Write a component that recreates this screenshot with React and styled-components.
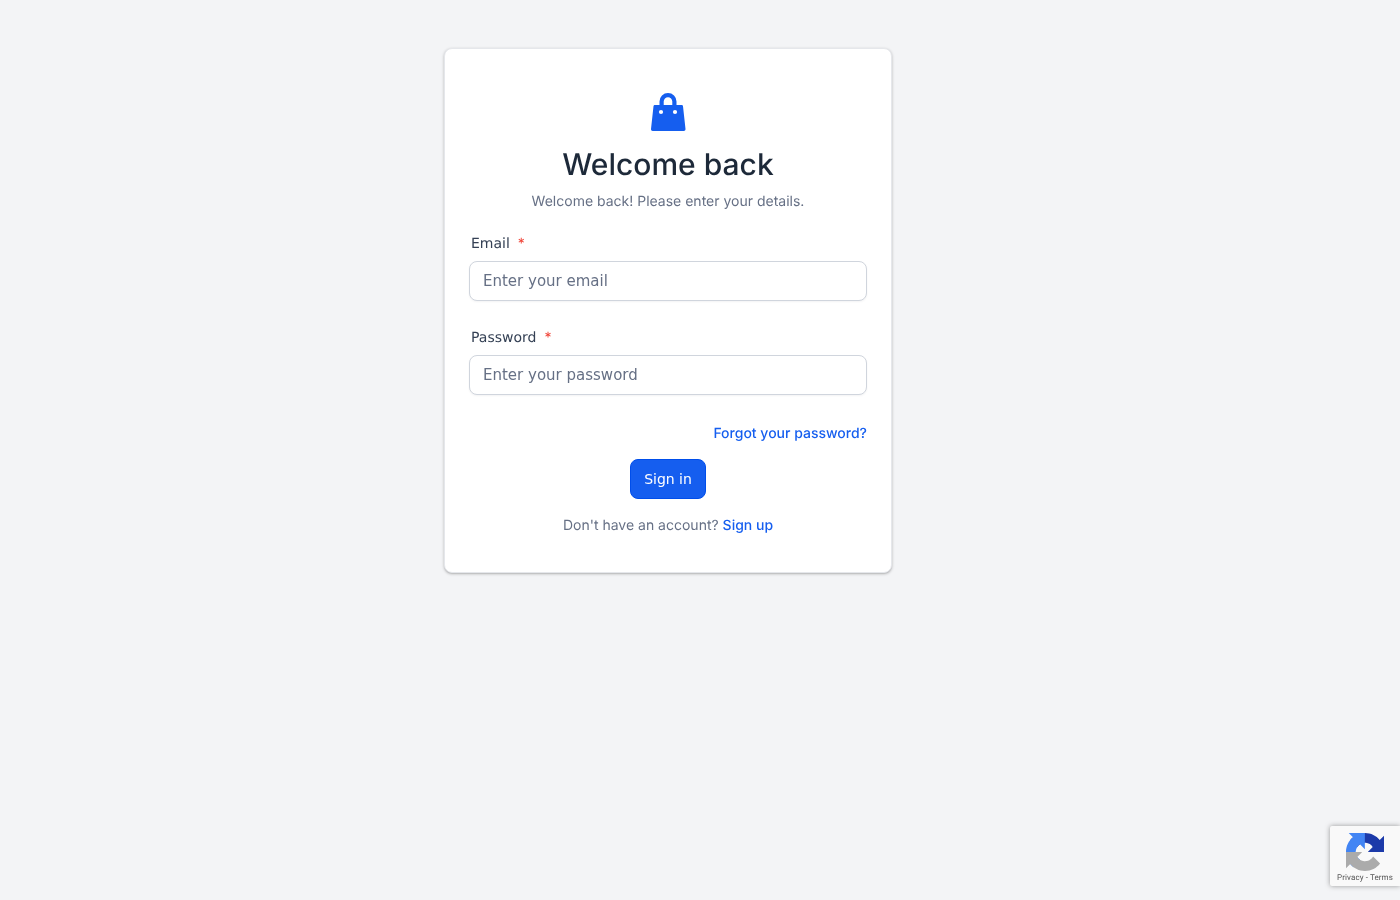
import React from "react";
import styled, { createGlobalStyle } from "styled-components";

const Global = createGlobalStyle`
  * { box-sizing: border-box; }
  html, body { margin: 0; height: 100%; background: #f3f4f6; }
  body { font-family: Inter, "Liberation Sans", sans-serif; text-rendering: geometricPrecision; }
`;
const Page = styled.main`
  min-height: 900px;
  padding: 48px 64px 0 0;
  display: flex;
  flex-direction: column;
  align-items: center;
  will-change: transform;
`;
const Card = styled.section`
  width: 448px;
  height: 525px;
  background: #fff;
  border: 1px solid #e5e7eb;
  border-radius: 8px;
  box-shadow: 0 1px 3px rgba(0,0,0,.25), 0 1px 2px -1px rgba(0,0,0,.2);
  padding: 40px 24px 0;
  display: flex;
  flex-direction: column;
`;
const Brand = styled.div`
  display: flex;
  flex-direction: column;
  align-items: center;
`;
const Logo = styled.svg`
  width: 48px;
  height: 48px;
  display: block;
  color: #155eef;
`;
const Title = styled.h1`
  margin: 10px 0 0;
  font: 500 30px/36px Inter, sans-serif;
  color: #1d2939;
`;
const Subtitle = styled.p`
  margin: 9px 0 0;
  font: 400 14px/20px Inter, sans-serif;
  color: #667085;
`;
const Form = styled.form`
  margin-top: 22px;
  display: flex;
  flex-direction: column;
`;
const Field = styled.div`
  display: flex;
  flex-direction: column;
  margin-bottom: 27px;
`;
const Label = styled.label`
  padding-left: 2px;
  font: 400 14px/20px "DejaVu Sans", sans-serif;
  color: #344054;
  margin-bottom: 7px;
`;
const Required = styled.span`
  color: #f04438;
  margin-left: 8px;
  font-family: Inter, sans-serif;
`;
const Input = styled.input`
  height: 40px;
  width: 100%;
  border: 1px solid #d0d5dd;
  border-radius: 8px;
  background: #fff;
  padding: 0 13px;
  font: 400 15px "DejaVu Sans", sans-serif;
  color: #101828;
  box-shadow: 0 1px 2px rgba(16,24,40,.05);
  &::placeholder { color: #667085; opacity: 1; }
`;
const Forgot = styled.div`
  display: flex;
  justify-content: flex-end;
  margin-top: 2px;
`;
const BlueLink = styled.a`
  color: #155eef;
  font: 500 14px/20px Inter, sans-serif;
  text-decoration: none;
`;
const Submit = styled.button`
  align-self: center;
  margin-top: 15px;
  width: 76px;
  height: 40px;
  background: #155eef;
  border: 1px solid #004eeb;
  border-radius: 8px;
  color: #fff;
  font: 400 14px "DejaVu Sans", sans-serif;
`;
const Footer = styled.p`
  margin: 17px 0 0;
  text-align: center;
  font: 400 14px/20px Inter, sans-serif;
  color: #667085;
`;
const Recaptcha = styled.aside`
  position: fixed;
  right: 0;
  bottom: 14px;
  width: 70px;
  height: 60px;
  background: #f9f9f9;
  border-radius: 2px 0 0 2px;
  box-shadow: 0 0 5px rgba(128,128,128,.8);
  display: flex;
  flex-direction: column;
  align-items: center;
  will-change: transform;
`;
const RecaptchaIcon = styled.svg`
  width: 38px;
  height: 38px;
  margin-top: 7px;
  display: block;
`;
const RecaptchaLinks = styled.div`
  margin-top: 2px;
  font: 400 8px/10px Roboto, "Liberation Sans", sans-serif;
  letter-spacing: .1px;
  color: #555;
  white-space: nowrap;
`;

export default function App() {
  return (
    <>
      <Global />
      <Page>
        <Card>
          <Brand>
            <Logo viewBox="0 0 48 48" aria-hidden="true">
              <path fill="currentColor" fillRule="evenodd" d="M15.500 16v-3.500a8.500 8.500 0 0 1 17 0V16h5c.8 0 1.400.5 1.500 1.300l2.500 22.700c.1 1-.7 2-1.700 2H8.700c-1 0-1.800-1-1.700-2l2.500-22.700c.1-.8.7-1.300 1.500-1.300h5Zm4.200 0h8.600v-3.500a4.300 4.300 0 0 0-8.600 0V16Z" />
              <circle cx="17" cy="23" r="2.100" fill="#fff" />
              <circle cx="31" cy="23" r="2.100" fill="#fff" />
            </Logo>
            <Title>Welcome back</Title>
            <Subtitle>Welcome back! Please enter your details.</Subtitle>
          </Brand>
          <Form onSubmit={(e) => e.preventDefault()}>
            <Field>
              <Label htmlFor="email">Email<Required>*</Required></Label>
              <Input id="email" type="email" placeholder="Enter your email" />
            </Field>
            <Field>
              <Label htmlFor="password">Password<Required>*</Required></Label>
              <Input id="password" type="password" placeholder="Enter your password" />
            </Field>
            <Forgot><BlueLink href="#">Forgot your password?</BlueLink></Forgot>
            <Submit type="submit">Sign in</Submit>
          </Form>
          <Footer>Don't have an account? <BlueLink href="#">Sign up</BlueLink></Footer>
        </Card>
      </Page>
      <Recaptcha>
        <RecaptchaIcon viewBox="0 0 64 64" aria-hidden="true">
          <path fill="#1c3aa9" d="M64 31.955l-.033-1.370V4.687l-7.160 7.160C50.948 4.674 42.033.093 32.050.093c-10.400 0-19.622 4.960-25.458 12.640l11.736 11.860a15.550 15.550 0 0 1 4.754-5.334c2.050-1.600 4.952-2.906 8.968-2.906.485 0 .860.057 1.135.163 4.976.393 9.288 3.140 11.828 7.124l-8.307 8.307c10.522-.040 22.400-.066 27.295.005" />
          <path fill="#4285f4" d="M31.862.094l-1.370.033H4.594l7.160 7.160C4.580 13.147 0 22.060 0 32.046c0 10.400 4.960 19.622 12.640 25.458L24.500 45.768a15.550 15.550 0 0 1-5.334-4.754c-1.600-2.050-2.906-4.952-2.906-8.968 0-.485.057-.860.163-1.135.393-4.976 3.140-9.288 7.124-11.828l8.307 8.307c-.040-10.522-.066-22.400.005-27.295" />
          <path fill="#ababab" d="M.001 32.045l.033 1.370v25.898l7.160-7.160c5.860 7.173 14.774 11.754 24.760 11.754 10.400 0 19.622-4.960 25.458-12.640l-11.736-11.860a15.550 15.550 0 0 1-4.754 5.334c-2.050 1.600-4.952 2.906-8.968 2.906-.485 0-.860-.057-1.135-.163-4.976-.393-9.288-3.140-11.828-7.124l8.307-8.307c-10.522.040-22.400.066-27.295-.005" />
        </RecaptchaIcon>
        <RecaptchaLinks>Privacy - Terms</RecaptchaLinks>
      </Recaptcha>
    </>
  );
}
